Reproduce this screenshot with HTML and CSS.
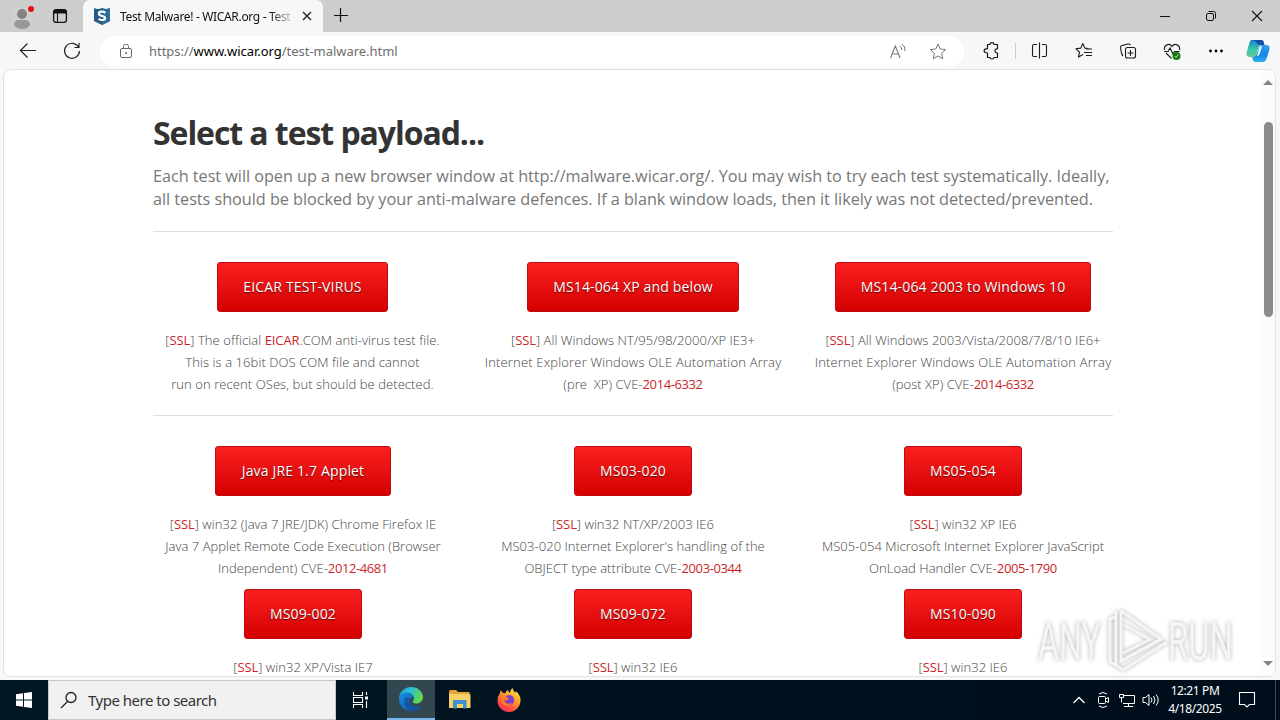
FILE: index.html
```html
<!DOCTYPE html>
<html lang="en">
<head>
  <meta charset="utf-8">
  <title>Test Malware! - WICAR.org - Test Your Anti-Malware Solution!</title>
  <link rel="stylesheet" href="styles.css">
</head>
<body>
  <div class="window">
    <div class="tabstrip">
      <div class="tab-actions">
        <svg class="profile" width="24" height="28" viewBox="0 0 24 28">
          <circle cx="11" cy="14" r="11" fill="#d1cfce"/>
          <circle cx="11" cy="11" r="5" fill="#858381"/>
          <path d="M3 22c0-3 2-5 4-5h8c2 0 4 2 4 5-2 3-5 4-8 4s-6-1-8-4z" fill="#9a9896"/>
          <circle cx="20" cy="6" r="3" fill="#e3101b"/>
        </svg>
        <svg class="workspaces" width="16" height="16" viewBox="0 0 16 16">
          <rect x="1.6" y="1.6" width="12.8" height="12.8" rx="2.4" fill="none" stroke="#111" stroke-width="1.3"/>
          <path d="M2 2h12v3.5H2z" fill="#111"/>
          <path d="M5.5 5v9" stroke="#111" stroke-width="1.1"/>
        </svg>
      </div>
      <div class="tab">
        <svg class="favicon" width="16" height="17" viewBox="0 0 16 17">
          <path d="M0 0q4 2 8 0q4 2 8 0v13l-8 4-8-4z" fill="#235a87"/>
          <path d="M8 0q4 2 8 0v13l-8 4z" fill="#2e6c9c"/>
          <path d="M11.3 4.8C9 3 4.700 3.200 4.900 5.900c.2 2.700 6.200 1.500 6.200 4.100 0 2.500-4.200 2.500-6.500.9" fill="none" stroke="#fff" stroke-width="2.200"/>
        </svg>
        <span class="tab-title">Test Malware! - WICAR.org - Test</span>
        <svg class="tab-close" width="10" height="10" viewBox="0 0 10 10"><path d="M1 1l8 8M9 1l-8 8" stroke="#222" stroke-width="1.4"/></svg>
      </div>
      <svg class="new-tab" width="14" height="14" viewBox="0 0 14 14"><path d="M6.500 0v14M0 7.500h14" stroke="#111" stroke-width="1.2"/></svg>
      <div class="window-buttons">
        <svg width="46" height="32" viewBox="0 0 46 32"><path d="M18 16.500h10" stroke="#111"/></svg>
        <svg width="46" height="32" viewBox="0 0 46 32"><rect x="18.500" y="13.500" width="7" height="7" rx="1.500" fill="none" stroke="#111"/><path d="M20.500 11.500h5q2 0 2 2v5" fill="none" stroke="#111"/></svg>
        <svg width="46" height="32" viewBox="0 0 46 32"><path d="M18 11l10 10M28 11l-10 10" stroke="#111" stroke-width="1.1"/></svg>
      </div>
    </div>

    <div class="toolbar">
      <svg class="nav-icon" width="44" height="38" viewBox="0 0 44 38"><path d="M20 18.500h16M27.500 11.500l-7 7 7 7" fill="none" stroke="#222" stroke-width="1.2"/></svg>
      <svg class="nav-icon" width="44" height="38" viewBox="0 0 44 38"><path d="M34.500 15a7.500 7.500 0 1 0 1 4M35 11v4.500h-4.500" fill="none" stroke="#222" stroke-width="1.2"/></svg>
      <div class="address">
        <svg class="lock" width="14" height="16" viewBox="0 0 14 16">
          <rect x="1.500" y="4.500" width="11" height="9" rx="1.500" fill="none" stroke="#666"/>
          <path d="M4.500 4.500V2.500a2.500 2.500 0 0 1 5 0v2" fill="none" stroke="#666"/><circle cx="7" cy="9" r="1" fill="#666"/>
        </svg>
        <span class="url">https://<b>www.wicar.org</b>/test-malware.html</span>
        <svg class="read-aloud" width="18" height="18" viewBox="0 0 18 18">
          <path d="M1.500 15l4.800-12 4.800 12M3 11h6.600" fill="none" stroke="#777" stroke-width="1.1"/>
          <path d="M11 3q2 1.500 1.700 4M13 1q3.500 2.500 3 7" fill="none" stroke="#777"/>
        </svg>
        <svg class="favourite" width="18" height="18" viewBox="0 0 18 18"><path d="M9 1l2.200 5 5.400.6-4 3.700 1.100 5.400L9 13l-4.700 2.700 1.100-5.400-4-3.700 5.400-.6z" fill="none" stroke="#777" stroke-linejoin="round"/></svg>
      </div>
      <div class="tools">
        <svg width="44" height="38" viewBox="0 0 44 38"><path d="M18.500 12.500h2.500c0-2.500 4-2.500 4 0h3.500v4.200c-3.500-.2-3.500 4.500 0 4.300v4.500h-3.500c0 2-4 2-4 0h-2.500v-4.500c-4.500 0-4.500-4.300 0-4.300z" fill="none" stroke="#1b1b1b" stroke-width="1.2" stroke-linejoin="round"/></svg>
        <span class="divider"></span>
        <svg width="44" height="38" viewBox="0 0 44 38"><path d="M19 12.500h-3q-1.500 0-1.500 1.500v9q0 1.500 1.500 1.500h3M24 12.500h3q1.500 0 1.500 1.500v9q0 1.500-1.500 1.500h-3M21.500 10.500v16" fill="none" stroke="#1b1b1b" stroke-width="1.1"/></svg>
        <svg width="44" height="38" viewBox="0 0 44 38"><path d="M26.500 16.500l-3.700-.4-2-4.600-2 4.600-5 .6 3.700 3.400-1 5 4.500-2.500M24 17h6M22 20.500h8M24 23.500h6" fill="none" stroke="#1b1b1b" stroke-width="1.1" stroke-linejoin="round"/></svg>
        <svg width="44" height="38" viewBox="0 0 44 38"><rect x="19.500" y="15.500" width="10" height="10.500" rx="2" fill="none" stroke="#1b1b1b" stroke-width="1.100"/><path d="M24.500 18v6M21.500 21h6M17 24q-1-1-1.500-3l-1-5q-.3-2 1.500-2.500l6-1.500q2-.3 2.500 1" fill="none" stroke="#1b1b1b" stroke-width="1.100"/></svg>
        <svg width="44" height="38" viewBox="0 0 44 38"><path d="M14.500 18c-1-5 5-7.500 7.500-3.500 2.500-4 8.500-1.500 7.500 3.500M16 21l5.500 5.500M14 19.500h4l2-3.500 3 6 1.500-2.500h5" fill="none" stroke="#1b1b1b" stroke-width="1.100"/><circle cx="26.500" cy="24" r="4" fill="#107c10"/><path d="M24.700 24.100l1.400 1.400 2.300-3" fill="none" stroke="#fff" stroke-width=".8"/></svg>
        <svg width="44" height="38" viewBox="0 0 44 38"><circle cx="16.500" cy="19" r="1.400"/><circle cx="22" cy="19" r="1.400"/><circle cx="27.500" cy="19" r="1.400"/></svg>
        <svg width="42" height="38" viewBox="0 0 42 38">
          <defs>
            <linearGradient id="cpLeft" x1="0" y1="0" x2="0" y2="1"><stop offset="0" stop-color="#1783c8"/><stop offset=".55" stop-color="#36c7ad"/><stop offset="1" stop-color="#67c98e"/></linearGradient>
            <linearGradient id="cpRight" x1="0" y1="0" x2="0" y2="1"><stop offset="0" stop-color="#2f9fe8"/><stop offset=".6" stop-color="#1686ee"/><stop offset="1" stop-color="#2bb0e8"/></linearGradient>
          </defs>
          <path d="M13.500 8h9q2.500 0 3 3l.6 2h-3q-2 0-3 3l-2 7q-.7 2-3 2h-3c-4 0-4-3-3-6l2-7q1-4 2.400-4z" fill="url(#cpLeft)"/>
          <path d="M14.500 8h9q2 0 2.500 3l.5 2h-5q-2 0-3-2.500T14.500 8z" fill="#124fa9"/>
          <path d="M25 13h3c4 0 4 3 3 6l-2.500 8q-1 3-3 3h-8q-2 0-2.500-2l-.8-3c2.800 0 3.800-1 4.400-3l2-6q1-3 4.400-3z" fill="url(#cpRight)"/>
          <path d="M21.500 15q1-1 2.500-.8l-2.500 8q-.5 1.800-2.500 1.800z" fill="#f4fbff"/>
        </svg>
      </div>
    </div>

    <div class="viewport">
      <main class="content">
        <h1>Select a test payload...</h1>
        <p class="lead">Each test will open up a new browser window at http://malware.wicar.org/. You may wish to try each test systematically. Ideally,<br>all tests should be blocked by your anti-malware defences. If a blank window loads, then it likely was not detected/prevented.</p>
        <hr>
        <div class="payloads first">
          <div class="payload">
            <a class="button w171">EICAR TEST-VIRUS</a>
            <p class="eicar">[<a>SSL</a>] The official <a>EICAR</a>.COM anti-virus test file.<br>This is a 16bit DOS COM file and cannot<br>run on recent OSes, but should be detected.</p>
          </div>
          <div class="payload">
            <a class="button w212">MS14-064 XP and below</a>
            <p>[<a>SSL</a>] All Windows NT/95/98/2000/XP IE3+<br><span class="ole">Internet Explorer Windows OLE Automation Array</span><br>(pre&nbsp; XP) CVE-<a class="cve">2014-6332</a></p>
          </div>
          <div class="payload">
            <a class="button w256">MS14-064 2003 to Windows 10</a>
            <p>[<a>SSL</a>] All Windows 2003/Vista/2008/7/8/10 IE6+<br><span class="ole">Internet Explorer Windows OLE Automation Array</span><br>(post XP) CVE-<a class="cve">2014-6332</a></p>
          </div>
        </div>
        <hr>
        <div class="payloads">
          <div class="payload">
            <a class="button w176">Java JRE 1.7 Applet</a>
            <p>[<a>SSL</a>] win32 (Java 7 JRE/JDK) Chrome Firefox IE<br>Java 7 Applet Remote Code Execution (Browser<br>Independent) CVE-<a class="cve">2012-4681</a></p>
          </div>
          <div class="payload">
            <a class="button w118">MS03-020</a>
            <p>[<a>SSL</a>] win32 NT/XP/2003 IE6<br>MS03-020 Internet Explorer's handling of the<br>OBJECT type attribute CVE-<a class="cve">2003-0344</a></p>
          </div>
          <div class="payload">
            <a class="button w118">MS05-054</a>
            <p>[<a>SSL</a>] win32 XP IE6<br>MS05-054 Microsoft Internet Explorer JavaScript<br>OnLoad Handler CVE-<a class="cve">2005-1790</a></p>
          </div>
          <div class="payload">
            <a class="button w118">MS09-002</a>
            <p>[<a>SSL</a>] win32 XP/Vista IE7</p>
          </div>
          <div class="payload">
            <a class="button w118">MS09-072</a>
            <p>[<a>SSL</a>] win32 IE6</p>
          </div>
          <div class="payload">
            <a class="button w118">MS10-090</a>
            <p>[<a>SSL</a>] win32 IE6</p>
          </div>
        </div>
      </main>
      <div class="scrollbar">
        <span class="arrow-up"></span>
        <span class="thumb"></span>
        <span class="arrow-down"></span>
      </div>
    </div>
  </div>

  <svg class="watermark" width="230" height="74" viewBox="0 0 230 74">
    <g class="mark-text">
      <text x="9" y="55" textLength="63" lengthAdjust="spacingAndGlyphs">ANY</text>
      <text x="139" y="55" textLength="65" lengthAdjust="spacingAndGlyphs">RUN</text>
    </g>
    <path class="mark-line" d="M88 11l-7 3v43l6 3M92 6v50l40-22-40-28M87 6v54l7 5 44-28M95 20l27 15M94 48l28-14"/>
  </svg>

  <div class="taskbar">
    <div class="start">
      <svg width="16" height="16" viewBox="0 0 16 16"><path d="M0 2.200l7-1v6.300H0zM8 1l8-1v7.500H8zM0 8.500h7v6.300l-7-1zM8 8.500h8V16l-8-1z" fill="#fff"/></svg>
    </div>
    <div class="search">
      <svg width="18" height="18" viewBox="0 0 18 18"><circle cx="11" cy="6.500" r="5" fill="none" stroke="#222" stroke-width="1.300"/><path d="M7.500 10.500L1 17" stroke="#222" stroke-width="1.300"/></svg>
      <span>Type here to search</span>
    </div>
    <div class="task">
      <svg width="18" height="16" viewBox="0 0 18 16"><path d="M1.500 0v3.500h9V0M1.500 16v-3.500h9V16M1.500 5.500h9v5h-9zM14.500 0v3M14.500 9v7" fill="none" stroke="#fff" stroke-width="1.100"/><path d="M13 4.500h3v3h-3z" fill="#fff"/></svg>
    </div>
    <div class="task active">
      <svg width="24" height="24" viewBox="0 0 24 24">
        <defs>
          <linearGradient id="edgeTop" x1="0" y1="0" x2="1" y2=".4"><stop offset="0" stop-color="#1b9de2"/><stop offset=".5" stop-color="#2bc2d2"/><stop offset="1" stop-color="#62d84e"/></linearGradient>
          <linearGradient id="edgeBottom" x1="0" y1="0" x2="1" y2="1"><stop offset="0" stop-color="#1691e2"/><stop offset="1" stop-color="#114f9c"/></linearGradient>
        </defs>
        <path d="M0 11C1 4 6 0 12 0c7 0 12 5 12 10 0 4-3 6.500-6.500 6.500-3 0-4.500-1.200-3.500-2.500 3-4-1-7-5-7-4 0-7 1-9 4z" fill="url(#edgeTop)"/>
        <path d="M0 12c0-4 4-6.500 8-6.500 4 0 7 2.500 7 5.500-1-1.500-3-1-4 1-2 4 2 8 6.500 8 2 0 4-.9 4.500-.5.4.4-3.500 4.500-10 4.500S0 19 0 12z" fill="url(#edgeBottom)"/>
        <path d="M7 10c-4 5-1 12 6 14 4 0 7-2 9-4.500-.5-.4-2 .5-4.500.5-5 0-9-4-6.500-9z" fill="#154f9b" opacity=".75"/>
      </svg>
    </div>
    <div class="task">
      <svg width="22" height="20" viewBox="0 0 22 20"><path d="M0 2q0-2 1.500-2H7l2 2h11.500v4H0z" fill="#e8a33d"/><path d="M0 4h20.500q1 0 1 1v13H0z" fill="#f8d066"/><path d="M4 11q0-1 1-1h11.500q1 0 1 1v7.500h-3.500V14h-6v4.500H4z" fill="#3e91d0"/></svg>
    </div>
    <div class="task">
      <svg width="24" height="24" viewBox="0 0 24 24">
        <defs><linearGradient id="fox" x1=".8" y1="0" x2=".2" y2="1"><stop offset="0" stop-color="#fff14a"/><stop offset=".4" stop-color="#ff9a28"/><stop offset=".75" stop-color="#ff4d42"/><stop offset="1" stop-color="#e62a71"/></linearGradient></defs>
        <path d="M3 5q0-2 1-3 .5 2 2 3l2.500.2Q8.500 3 11 2q0 1.800 2 2.800Q13 2 15.500 0q.5 3 3 5 0-1 .2-2C22 6 24 9 23.500 13c-.4 6-5 11-11.500 11S.5 19 .5 13Q.5 8 3 5z" fill="url(#fox)"/>
        <path d="M8 9c2-3 8-3 9 2 .5 4-2 6-5 6-3.500 0-6-2.500-5.500-5.500 1 1.500 3 1.200 5 .2-1-1.700-2-2.300-3.500-2.700z" fill="#7841c8"/>
        <path d="M3 8c3-2 6 0 9 3-2 1-3 2-5 1 1 3 4 5 8 3-2 4-9 4-11-2z" fill="#ff7a2c"/>
      </svg>
    </div>
    <div class="tray">
      <svg width="24" height="20" viewBox="0 0 24 20"><path d="M6.500 13l5.500-5.500 5.500 5.500" fill="none" stroke="#fff" stroke-width="1.300"/></svg>
      <svg width="24" height="20" viewBox="0 0 24 20"><rect x="7.500" y="6.500" width="7" height="7" rx="1" fill="none" stroke="#fff"/><path d="M14.500 9l3-1.500v5l-3-1.500M8 4q4-3 8 0M8 16q4 3 8 0" fill="none" stroke="#fff"/></svg>
      <svg width="24" height="20" viewBox="0 0 24 20"><path d="M8 5.500h11.500v8H8M13.500 13.500v3M9 16.500h9M4.500 4.500h4v3h-4zM6.500 7.500v5" fill="none" stroke="#fff"/></svg>
      <svg width="24" height="20" viewBox="0 0 24 20"><path d="M4 7.500h2.500L10 4.500v11l-3.500-3H4zM12 7.500q2 2.500 0 5M14.500 6q3 4 0 8M17 4.500q4.500 5.500 0 11" fill="none" stroke="#fff"/></svg>
      <div class="clock"><span>12:21 PM</span><span class="date">4/18/2025</span></div>
      <svg class="notice" width="18" height="18" viewBox="0 0 18 18"><path d="M1.500 1.500h15v12h-5L9 16l-2.500-2.500h-5z" fill="none" stroke="#fff" stroke-width="1.100"/></svg>
      <span class="show-desktop"></span>
    </div>
  </div>
</body>
</html>
```
FILE: styles.css
```css
* { box-sizing: border-box; }
body {
  margin: 0;
  width: 1280px;
  height: 720px;
  overflow: hidden;
  background: #f7f7f7;
  font-family: "Open Sans", sans-serif;
}
svg { display: block; flex: none; }
.window {
  height: 680px;
  background: #f7f7f7;
}

/* tabs */
.tabstrip {
  display: flex;
  height: 32px;
  background: #cdcdcd;
}
.tab-actions {
  display: flex;
  align-items: center;
  width: 83px;
}
.profile { margin-left: 11px; margin-top: 2px; }
.workspaces { margin-left: 17px; }
.tab {
  display: flex;
  align-items: center;
  width: 240px;
  padding-left: 11px;
  background: #f7f7f7;
  border-radius: 7px 7px 0 0;
}
.tab-title {
  width: 172px;
  margin-left: 10px;
  white-space: nowrap;
  font-family: "Noto Sans", sans-serif;
  font-size: 12px;
  letter-spacing: -0.33px;
  color: #111;
  -webkit-mask-image: linear-gradient(to right, #000 150px, transparent 176px);
  mask-image: linear-gradient(to right, #000 150px, transparent 176px);
}
.tab-close { margin-left: 10px; }
.new-tab { margin: 8px 0 0 11px; }
.window-buttons {
  display: flex;
  margin-left: auto;
}

/* toolbar */
.toolbar {
  display: flex;
  height: 38px;
}
.address {
  display: flex;
  align-items: center;
  width: 864px;
  height: 31px;
  margin: 4px 0 0 12px;
  padding-left: 19px;
  background: #fff;
  border-radius: 16px;
}
.url {
  width: 740px;
  margin-left: 16px;
  padding-bottom: 2px;
  font-family: "Noto Sans", sans-serif;
  font-size: 13px;
  letter-spacing: -0.03px;
  color: #6d6d6d;
  white-space: nowrap;
}
.url b {
  font-weight: 400;
  color: #000;
}
.favourite { margin-left: 22px; }
.tools {
  display: flex;
  margin-left: 5px;
}
.divider {
  width: 1px;
  height: 16px;
  margin: 11px 2px 0;
  background: #ccc;
}

/* web page */
.viewport {
  display: flex;
  width: 1273px;
  height: 608px;
  margin-top: -1px;
  margin-left: 3px;
  overflow: hidden;
  background: #fff;
  border: 1px solid #e2e2e2;
  border-radius: 8px;
}
.content {
  width: 960px;
  margin-left: 149px;
}
h1 {
  margin: 41px 0 0;
  font-size: 32px;
  line-height: 44px;
  letter-spacing: -1.07px;
  color: #333;
  white-space: nowrap;
}
.lead {
  margin: 10px 0 20px;
  font-size: 16.25px;
  line-height: 23px;
  letter-spacing: -0.04px;
  color: #777;
  white-space: nowrap;
}
hr {
  height: 1px;
  margin: 0;
  border: 0;
  background: #ddd;
}
.payloads {
  display: grid;
  grid-template-columns: repeat(3, 300px);
  column-gap: 30px;
  row-gap: 10px;
  padding-top: 30px;
}
.payloads.first { padding-bottom: 20px; }
.payload {
  display: flex;
  flex-direction: column;
  align-items: center;
}
.payload p {
  margin: 17px 0 0;
  font-size: 13px;
  font-weight: 300;
  line-height: 22px;
  letter-spacing: 0.04px;
  color: #444;
  text-align: center;
  white-space: nowrap;
}
.payload p.eicar {
  padding-right: 1px;
  letter-spacing: 0.08px;
}
.payload p a {
  font-weight: 400;
  letter-spacing: -0.1px;
  color: #cc1f28;
}
.payload p .cve { letter-spacing: -0.4px; }
.payload .ole { letter-spacing: 0.17px; }
.button {
  height: 50px;
  border: 1px solid #bf0b12;
  border-radius: 3px;
  background: linear-gradient(#fb2020, #d40000);
  font-size: 14px;
  line-height: 48px;
  letter-spacing: 0.16px;
  text-align: center;
  color: #fff;
  text-shadow: 0 1px 1px rgba(0, 0, 0, 0.6);
}
.w118 { width: 118px; }
.w171 { width: 171px; margin-right: 1px; }
.w176 { width: 176px; }
.w212 { width: 212px; }
.w256 { width: 256px; }
.scrollbar {
  display: flex;
  flex-direction: column;
  align-items: center;
  width: 14px;
  margin-left: auto;
  background: #fcfcfc;
}
.arrow-up, .arrow-down {
  border: 5px solid transparent;
}
.arrow-up {
  margin-top: 5px;
  border-bottom-color: #858585;
}
.arrow-down {
  margin-top: auto;
  margin-bottom: 5px;
  border-top-color: #858585;
}
.thumb {
  width: 9px;
  height: 195px;
  margin-top: 37px;
  border-radius: 5px;
  background: #8b8b8b;
}

.watermark {
  position: absolute;
  left: 1029px;
  top: 605px;
  filter: drop-shadow(0 0 2px rgba(0, 0, 0, 0.3));
}
.mark-text {
  fill: #f5f5f5;
  font-family: Roboto, sans-serif;
  font-size: 53px;
}
.mark-line {
  fill: none;
  stroke: #f5f5f5;
  stroke-width: 3;
}

/* taskbar */
.taskbar {
  display: flex;
  height: 40px;
  background: linear-gradient(to right, #001722, #000d1b);
}
.start {
  display: flex;
  align-items: center;
  width: 48px;
  padding-left: 16px;
}
.search {
  display: flex;
  align-items: center;
  width: 288px;
  padding-left: 11px;
  background: #f1f1f1;
  border: 1px solid #c8c8c8;
  font-family: "Noto Sans", sans-serif;
  font-size: 15px;
  color: #333;
}
.search span { margin-left: 10px; letter-spacing: -0.5px; }
.task {
  display: flex;
  align-items: center;
  justify-content: center;
  width: 49px;
}
.task.active {
  width: 48px;
  margin-left: 2px;
  background: #32474f;
  border-bottom: 2px solid #76b9ed;
}
.tray {
  display: flex;
  align-items: center;
  margin-left: auto;
}
.clock {
  display: flex;
  flex-direction: column;
  align-items: center;
  width: 64px;
  font-family: "Noto Sans", sans-serif;
  font-size: 12px;
  line-height: 18px;
  letter-spacing: -0.4px;
  color: #fff;
  white-space: nowrap;
}
.notice { margin-left: 11px; }
.show-desktop {
  width: 1px;
  height: 40px;
  margin: 0 4px 0 19px;
  background: #3d4a55;
}
```
